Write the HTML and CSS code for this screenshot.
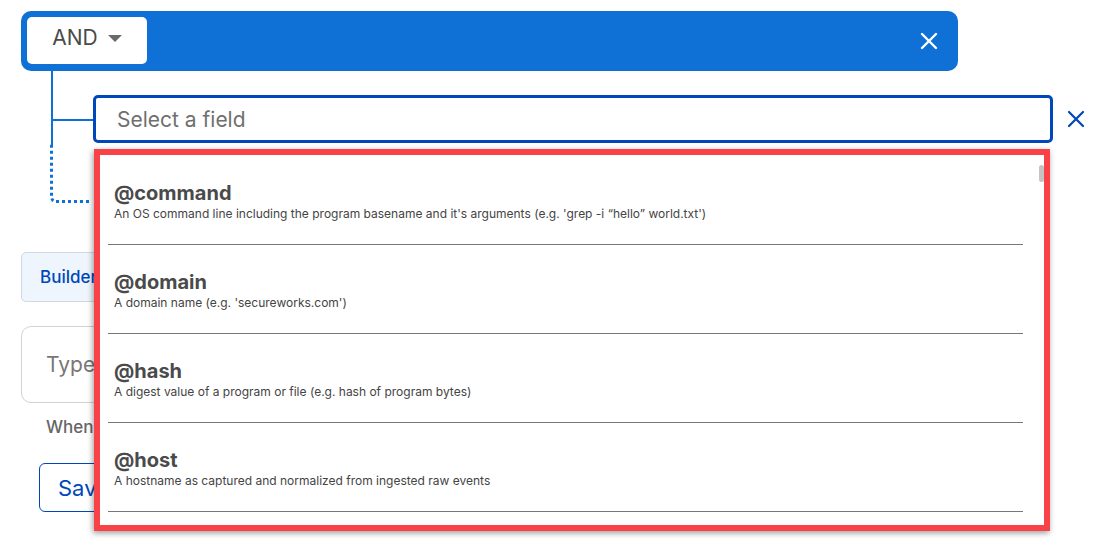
FILE: index.html
```html
<!DOCTYPE html>
<html lang="en">
<head>
    <meta charset="UTF-8">
    <title>Query Builder</title>
    <link rel="stylesheet" href="styles.css">
</head>
<body>

    <div class="page">
        <div class="group-bar">
            <button class="op-btn">AND <span class="caret"></span></button>
            <button class="icon-btn light" aria-label="Remove group">
                <svg width="18" height="18" viewBox="0 0 18 18"><path d="M2 2L16 16M16 2L2 16" stroke="#fff" stroke-width="2.4" stroke-linecap="round"/></svg>
            </button>
        </div>

        <div class="tree">
            <div class="rail">
                <div class="stem top"></div>
                <div class="branch"></div>
                <div class="stem mid"></div>
                <div class="stem dotted"></div>
            </div>
            <div class="rows">
                <div class="field-row">
                    <div class="field-select">Select a field</div>
                    <button class="icon-btn" aria-label="Remove condition">
                        <svg width="18" height="18" viewBox="0 0 18 18"><path d="M2 2L16 16M16 2L2 16" stroke="#0047bb" stroke-width="2.2" stroke-linecap="round"/></svg>
                    </button>
                </div>
            </div>
        </div>

        <div class="tabs">
            <button class="tab active">Builder</button>
        </div>

        <div class="query-box">Type</div>
        <p class="hint">When</p>
        <button class="save-btn">Save</button>

        <div class="dropdown">
            <ul class="options">
                <li>
                    <span class="opt-name">@command</span>
                    <span class="opt-desc">An OS command line including the program basename and it's arguments (e.g. 'grep -i “hello” world.txt')</span>
                </li>
                <li>
                    <span class="opt-name">@domain</span>
                    <span class="opt-desc">A domain name (e.g. 'secureworks.com')</span>
                </li>
                <li>
                    <span class="opt-name">@hash</span>
                    <span class="opt-desc">A digest value of a program or file (e.g. hash of program bytes)</span>
                </li>
                <li>
                    <span class="opt-name">@host</span>
                    <span class="opt-desc">A hostname as captured and normalized from ingested raw events</span>
                </li>
            </ul>
            <div class="scroll-thumb"></div>
        </div>
    </div>

</body>
</html>
```

FILE: styles.css
```css
html, body {
    height: 100%;
}
body {
    font-family: Inter, "Noto Sans", Arial, sans-serif;
    background: #fff;
    margin: 0;
    color: #4a4a4a;
}
button {
    font-family: inherit;
    cursor: pointer;
}
.page {
    position: relative;
    min-height: 554px;
    box-sizing: border-box;
    padding: 11px 0 0 21px;
}
.group-bar {
    width: 937px;
    height: 60px;
    box-sizing: border-box;
    background: #0f71d6;
    border-radius: 10px;
    padding: 6px 20px 7px 6px;
    display: flex;
    align-items: center;
    justify-content: space-between;
}
.op-btn {
    width: 120px;
    height: 47px;
    background: #fff;
    border: none;
    border-radius: 5px;
    font-size: 21px;
    color: #4a4a4a;
    display: flex;
    align-items: center;
    justify-content: center;
    gap: 10px;
    padding: 0 0 6px 0;
}
.caret {
    width: 0;
    height: 0;
    border-left: 7px solid transparent;
    border-right: 7px solid transparent;
    border-top: 7px solid #6a6a6a;
    margin-top: 2px;
}
.icon-btn {
    background: none;
    border: none;
    padding: 0;
    width: 18px;
    height: 18px;
    display: flex;
}
.tree {
    display: flex;
}
.rail {
    width: 72px;
    display: flex;
    flex-direction: column;
}
.stem {
    margin-left: 30px;
    border-left: 2px solid #0f71d6;
}
.stem.top {
    height: 48px;
}
.branch {
    margin-left: 30px;
    height: 2px;
    width: 42px;
    background: #0f71d6;
}
.stem.mid {
    height: 23px;
}
.stem.dotted {
    height: 56px;
    width: 36px;
    border-left: 3px dotted #0f71d6;
    border-bottom: 3px dotted #0f71d6;
    border-bottom-left-radius: 6px;
    margin-left: 29px;
}
.rows {
    flex: 1;
}
.field-row {
    display: flex;
    align-items: center;
    gap: 14px;
    margin-top: 24px;
}
.field-select {
    width: 960px;
    height: 48px;
    box-sizing: border-box;
    border: 3px solid #0047bb;
    border-radius: 5px;
    padding: 0 21px;
    display: flex;
    align-items: center;
    font-size: 21px;
    color: #6f6f6f;
}
.tabs {
    display: flex;
    margin-top: 49px;
}
.tab {
    height: 50px;
    padding: 0 40px 0 18px;
    background: #eef5fd;
    border: 1px solid #cfd8e3;
    border-radius: 5px;
    font-size: 17px;
    font-weight: 500;
    color: #0047bb;
}
.query-box {
    margin-top: 24px;
    width: 600px;
    height: 77px;
    box-sizing: border-box;
    border: 1px solid #d2d2d2;
    border-radius: 10px;
    padding: 0 24px;
    display: flex;
    align-items: center;
    font-size: 21px;
    color: #777;
}
.hint {
    margin: 14px 0 0 25px;
    font-size: 17px;
    font-weight: 500;
    color: #666;
    line-height: 20px;
}
.save-btn {
    margin: 26px 0 0 18px;
    height: 49px;
    padding: 0 40px 0 18px;
    background: #fff;
    border: 1px solid #0047bb;
    border-radius: 6px;
    font-size: 22px;
    color: #0047bb;
}
.dropdown {
    position: absolute;
    left: 94px;
    top: 149px;
    width: 956px;
    height: 382px;
    box-sizing: border-box;
    background: #fff;
    border: 6px solid #f84248;
    box-shadow: -1px 2px 6px rgba(0, 0, 0, 0.4);
    overflow: hidden;
}
.options {
    list-style: none;
    margin: 0;
    padding: 0;
    margin-left: 8px;
    width: 915px;
}
.options li {
    height: 89px;
    box-sizing: border-box;
    border-bottom: 1px solid #777;
    padding: 25px 0 0 6px;
    display: flex;
    flex-direction: column;
}
.options li:first-child {
    height: 90px;
    padding-top: 26px;
}
.opt-name {
    font-size: 20px;
    font-weight: 700;
    line-height: 24px;
    color: #4a4a4a;
}
.opt-desc {
    font-size: 12px;
    line-height: 17px;
    color: #444;
}
.scroll-thumb {
    position: absolute;
    right: 0;
    top: 10px;
    width: 5px;
    height: 17px;
    border-radius: 3px;
    background: #c4c4c4;
}
```
